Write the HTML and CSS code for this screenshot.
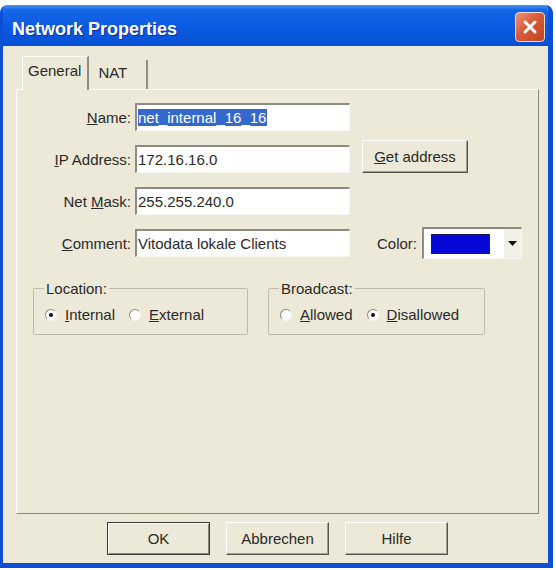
FILE: index.html
```html
<!DOCTYPE html>
<html lang="en">
<head>
    <meta charset="UTF-8">
    <title>Network Properties</title>
    <link rel="stylesheet" href="styles.css">
</head>
<body>
    <div class="window">
        <div class="titlebar">
            <span class="title">Network Properties</span>
            <button class="close" aria-label="Close">
                <svg width="16" height="16" viewBox="0 0 16 16"><path d="M3 3 L13 13 M13 3 L3 13" stroke="#fff" stroke-width="3" stroke-linecap="round"/></svg>
            </button>
        </div>
        <div class="client">
            <div class="tabs">
                <div class="tab active">General</div>
                <div class="tab">NAT</div>
            </div>
            <div class="panel">
                <div class="form">
                    <label class="lbl"><u>N</u>ame:</label>
                    <div class="field"><span class="sel">net_internal_16_16</span></div>
                    <div></div>

                    <label class="lbl"><u>I</u>P Address:</label>
                    <div class="field">172.16.16.0</div>
                    <button class="btn get"><u>G</u>et address</button>

                    <label class="lbl">Net <u>M</u>ask:</label>
                    <div class="field">255.255.240.0</div>
                    <div></div>

                    <label class="lbl"><u>C</u>omment:</label>
                    <div class="field">Vitodata lokale Clients</div>
                    <div class="color-cell">
                        <span>Color:</span>
                        <div class="color-box">
                            <span class="swatch"></span>
                            <span class="drop">
                                <svg width="9" height="5" viewBox="0 0 9 5"><path d="M0 0 H9 L4.5 5 Z" fill="#111"/></svg>
                            </span>
                        </div>
                    </div>
                </div>

                <div class="groups">
                    <fieldset class="group loc">
                        <legend>Location:</legend>
                        <div class="options">
                            <label class="radio"><span class="dot on"></span><span><u>I</u>nternal</span></label>
                            <label class="radio"><span class="dot"></span><span><u>E</u>xternal</span></label>
                        </div>
                    </fieldset>
                    <fieldset class="group bc">
                        <legend>Broadcast:</legend>
                        <div class="options">
                            <label class="radio"><span class="dot"></span><span><u>A</u>llowed</span></label>
                            <label class="radio"><span class="dot on"></span><span><u>D</u>isallowed</span></label>
                        </div>
                    </fieldset>
                </div>
            </div>
            <div class="actions">
                <button class="btn action default">OK</button>
                <button class="btn action">Abbrechen</button>
                <button class="btn action">Hilfe</button>
            </div>
        </div>
    </div>
</body>
</html>
```

FILE: styles.css
```css
* { box-sizing: border-box; }
body { margin: 0; background: #fff; font-family: "Liberation Sans", Arial, sans-serif; font-size: 15px; color: #2a2a2a; }

/* window frame */
.window { margin-top: 5px; width: 553px; border: solid #0b4fd6; border-width: 0 5px 5px 3px; border-radius: 8px 8px 0 0; overflow: hidden; }
.titlebar { height: 41px; display: flex; align-items: center; justify-content: space-between; padding: 3px 3px 0 9px; background: linear-gradient(#4a95f4 0%, #1466e6 12%, #0a5ae2 55%, #0650d4 100%); }
.title { margin-top: 4px; color: #fff; font-weight: bold; font-size: 18px; text-shadow: 1px 1px 0 #0b2f9c; }
.close { width: 30px; height: 30px; padding: 0; border: 1px solid #f3d9cf; border-radius: 4px; background: linear-gradient(135deg, #ec9678 0%, #d85a37 45%, #c2431f 100%); display: flex; align-items: center; justify-content: center; }

.client { height: 517px; background: #ece9d8; padding: 10px 9px 8px 13px; }

/* tabs */
.tabs { display: flex; align-items: flex-end; height: 33px; margin-left: 6px; position: relative; z-index: 1; }
.tab { height: 29px; display: flex; align-items: center; padding: 0 19px 4px 9px; border-right: 2px solid #8e8c83; }
.tab.active { height: 34px; margin-bottom: -1px; padding: 0 6px 6px 5px; background: #ece9d8; border-top: 1px solid #fff; border-left: 1px solid #fff; }

.panel { height: 425px; border: 1px solid; border-color: #fff #8a887e #8a887e #fff; padding-top: 13px; }

/* form rows */
.form { display: grid; grid-template-columns: 114px 215px 1fr; grid-auto-rows: 28px; row-gap: 14px; column-gap: 4px; align-items: center; }
.lbl { text-align: right; white-space: nowrap; }
.field { height: 28px; background: #fff; border-style: solid; border-width: 2px 1px 1px 2px; border-color: #8d8b82 #f7f6f1 #f7f6f1 #8d8b82; padding-left: 1px; display: flex; align-items: center; white-space: nowrap; overflow: hidden; }
.sel { background: #3468cc; color: #fff; padding-right: 1px; }

.btn { font: inherit; color: inherit; background: #ece9d8; border: 1px solid; border-color: #fff #55544f #55544f #fff; box-shadow: inset -1px -1px 0 #a09e94; padding: 0; }
.btn.get { width: 106px; height: 33px; align-self: end; justify-self: start; margin-left: 8px; }

.color-cell { display: flex; align-items: center; gap: 5px; padding-left: 23px; }
.color-box { width: 100px; height: 32px; background: #fff; border-style: solid; border-width: 2px 1px 1px 2px; border-color: #8d8b82 #f7f6f1 #f7f6f1 #8d8b82; display: flex; align-items: center; padding-left: 7px; }
.swatch { width: 59px; height: 20px; background: #0707d8; border: 1px solid #1b1b60; }
.drop { margin-left: auto; width: 17px; height: 100%; display: flex; align-items: center; justify-content: center; background: #f2f0e6; }

/* group boxes */
.groups { display: flex; gap: 20px; margin: 23px 0 0 16px; }
.group { margin: 0; min-width: 0; padding: 9px 10px 11px; border: 1px solid #bebbab; border-radius: 2px; }
.group.loc { width: 215px; }
.group.bc { width: 217px; }
.group legend { padding: 0 2px; }
.options { display: flex; gap: 14px; padding-left: 1px; }
.radio { display: flex; align-items: center; gap: 8px; }
.dot { width: 12px; height: 12px; border-radius: 50%; background: #fff; border: 1px solid; border-color: #8c8a82 #f5f4ee #f5f4ee #8c8a82; display: flex; align-items: center; justify-content: center; }
.dot.on::after { content: ""; width: 4px; height: 4px; border-radius: 50%; background: #111; }

/* dialog buttons */
.actions { display: flex; justify-content: center; gap: 16px; margin-top: 8px; }
.btn.action { width: 103px; height: 33px; }
.btn.default { border-color: #3a3935; box-shadow: inset 1px 1px 0 #fff, inset -1px -1px 0 #8a887e; }
```
